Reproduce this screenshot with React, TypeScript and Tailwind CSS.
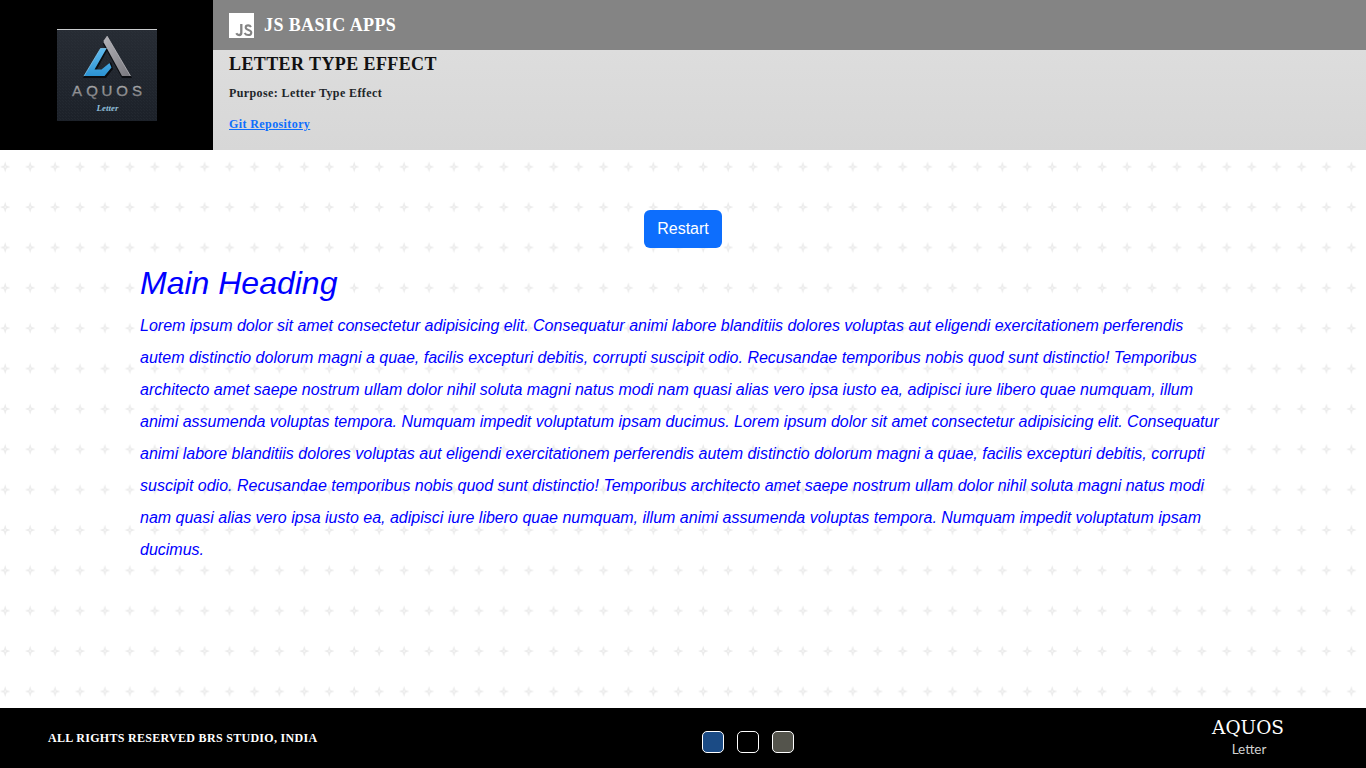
const LOREM =
  "Lorem ipsum dolor sit amet consectetur adipisicing elit. Consequatur animi labore blanditiis dolores voluptas aut eligendi exercitationem perferendis autem distinctio dolorum magni a quae, facilis excepturi debitis, corrupti suscipit odio. Recusandae temporibus nobis quod sunt distinctio! Temporibus architecto amet saepe nostrum ullam dolor nihil soluta magni natus modi nam quasi alias vero ipsa iusto ea, adipisci iure libero quae numquam, illum animi assumenda voluptas tempora. Numquam impedit voluptatum ipsam ducimus.";

function Logo() {
  return (
    <svg width="100" height="92" viewBox="0 0 100 92" role="img" aria-label="Aquos Letter">
      <defs>
        <linearGradient id="card" x1="0" y1="0" x2="0" y2="1">
          <stop offset="0" stopColor="#272c34" />
          <stop offset="1" stopColor="#1c2129" />
        </linearGradient>
        <linearGradient id="blue" x1="0" y1="0" x2="0" y2="1">
          <stop offset="0" stopColor="#62bdf0" />
          <stop offset="1" stopColor="#2b92d2" />
        </linearGradient>
        <linearGradient id="steel" x1="0" y1="0" x2="1" y2="1">
          <stop offset="0" stopColor="#b5b4b9" />
          <stop offset="1" stopColor="#77767c" />
        </linearGradient>
        <linearGradient id="metal" x1="0" y1="0" x2="0" y2="1">
          <stop offset="0" stopColor="#b4b4b6" />
          <stop offset="1" stopColor="#77777b" />
        </linearGradient>
        <pattern id="weave" width="3" height="3" patternUnits="userSpaceOnUse">
          <path d="M0 0h1v1H0zM2 2h1v1H2z" fill="#343a43" fillOpacity="0.25" />
        </pattern>
      </defs>
      <rect width="100" height="92" fill="url(#card)" />
      <rect width="100" height="92" fill="url(#weave)" />
      <rect width="100" height="1" fill="#c9cbcd" />
      <path d="M50 8L75 49H65L46 15Z" fill="#0b0d11" />
      <path d="M26 49H49L56 40L54 33L44 42H39L51 20H44Z" fill="#0b0d11" />
      <path d="M50 7L73.500 47H65L46.700 13.500V11.500Z" fill="url(#steel)" />
      <path d="M50 7L73.500 47" stroke="#c8c7cb" strokeWidth="0.700" />
      <path d="M43.500 19.500H49.500L37.500 40.500H44.500L52.500 34L54.500 38.500L47.500 47H27Z" fill="url(#blue)" />
      <path d="M27 47L43.500 19.500H49.500" fill="none" stroke="#8bd0f5" strokeWidth="0.700" />
      <g fontFamily="Liberation Sans, sans-serif" fontSize="15" fontWeight="400" textAnchor="middle" strokeWidth="0.300">
        {["A", "Q", "U", "O", "S"].map((letter, i) => (
          <text key={letter} x={20 + i * 15} y="67" fill="url(#metal)" stroke="url(#metal)">{letter}</text>
        ))}
      </g>
      <text x="50.500" y="82" textAnchor="middle" fontFamily="Liberation Serif, serif" fontStyle="italic" fontWeight="700" fontSize="9" fill="#8fbed9">
        Letter
      </text>
    </svg>
  );
}

function JsIcon() {
  return (
    <svg width="25" height="25" viewBox="0 0 25 25" aria-hidden="true">
      <rect width="25" height="25" fill="#fff" />
      <path d="M12.300 11V19.800C12.300 21.400 11.500 22 10.100 22C8.700 22 8 21.500 7.300 20.200" fill="none" stroke="#848484" strokeWidth="2.300" />
      <path d="M22 14C21.300 12.900 20.500 12.400 19.200 12.400C17.700 12.400 16.700 13.200 16.700 14.500C16.700 17.600 22.300 16.200 22.300 19.400C22.300 21.100 21 22 19.300 22C17.600 22 16.400 21.300 15.600 19.900" fill="none" stroke="#848484" strokeWidth="2.100" />
    </svg>
  );
}

function StarField() {
  return (
    <svg className="absolute inset-0 -z-10 h-full w-full" aria-hidden="true">
      <defs>
        <pattern id="stars" width="24.930" height="40.360" patternUnits="userSpaceOnUse">
          <path d="M5.200 11.300L6.500 15.500L10.500 16.800L6.500 18.100L5.200 22.300L3.900 18.100L0 16.800L3.900 15.500Z" fill="#ebebeb" />
          <circle cx="5.200" cy="16.800" r="0.900" fill="#f8f8f8" />
        </pattern>
      </defs>
      <rect width="100%" height="100%" fill="url(#stars)" />
    </svg>
  );
}

export default function App() {
  return (
    <div className="flex min-h-screen flex-col bg-white font-['Liberation_Sans',sans-serif] text-base">
      <header className="flex bg-black">
        <div className="flex w-[213px] shrink-0 items-center justify-center">
          <Logo />
        </div>
        <div className="flex min-h-[150px] flex-1 flex-col font-['Liberation_Serif',serif] font-bold tracking-wide">
          <div className="flex h-[50px] items-center gap-2.5 bg-[#848484] px-4 text-lg text-white">
            <JsIcon />
            <span>JS BASIC APPS</span>
          </div>
          <div className="flex-1 bg-linear-to-b from-[#dddddd] to-[#d7d7d7] px-4 text-[#212529]">
            <h1 className="text-lg text-[#111111]">LETTER TYPE EFFECT</h1>
            <p className="mt-1.5 text-xs leading-[18px]">Purpose: Letter Type Effect</p>
            <p className="mt-[13px] text-xs leading-[18px]">
              <a href="#repository" className="text-[#0d6efd] underline">Git Repository</a>
            </p>
          </div>
        </div>
      </header>

      <main className="relative isolate flex flex-1 flex-col px-[140px] pt-[60px] pb-8">
        <StarField />
        <button type="button" className="self-center rounded-md bg-[#0d6efd] px-[13px] py-[7px] leading-6 text-white">
          Restart
        </button>
        <h2 className="mt-4 mb-2 text-[32px] leading-[38px] text-[#0000ff] italic">Main Heading</h2>
        <p className="leading-8 text-[#0000ff] italic">{`${LOREM} ${LOREM}`}</p>
      </main>

      <footer className="grid min-h-[60px] grid-cols-[5fr_auto_4fr] items-center bg-black px-12 text-white">
        <p className="font-['Liberation_Serif',serif] text-xs font-bold tracking-wide">ALL RIGHTS RESERVED BRS STUDIO, INDIA</p>
        <div className="flex gap-[13px] pt-2">
          <button type="button" aria-label="Blue theme" className="size-[22px] rounded-[5px] border border-white bg-[#1b4b85]" />
          <button type="button" aria-label="Black theme" className="size-[22px] rounded-[5px] border border-white bg-black" />
          <button type="button" aria-label="Gray theme" className="size-[22px] rounded-[5px] border border-white bg-[#54544c]" />
        </div>
        <svg className="mr-8 justify-self-end" width="76" height="44" viewBox="0 0 76 44" role="img" aria-label="Aquos Letter">
          <text x="38" y="18" textAnchor="middle" fontFamily="DejaVu Serif, serif" fontSize="18.500" fill="#fff">AQUOS</text>
          <text x="39" y="38" textAnchor="middle" fontFamily="Lato, sans-serif" fontWeight="400" fontSize="13.500" fill="#d0d0d0">Letter</text>
        </svg>
      </footer>
    </div>
  );
}
